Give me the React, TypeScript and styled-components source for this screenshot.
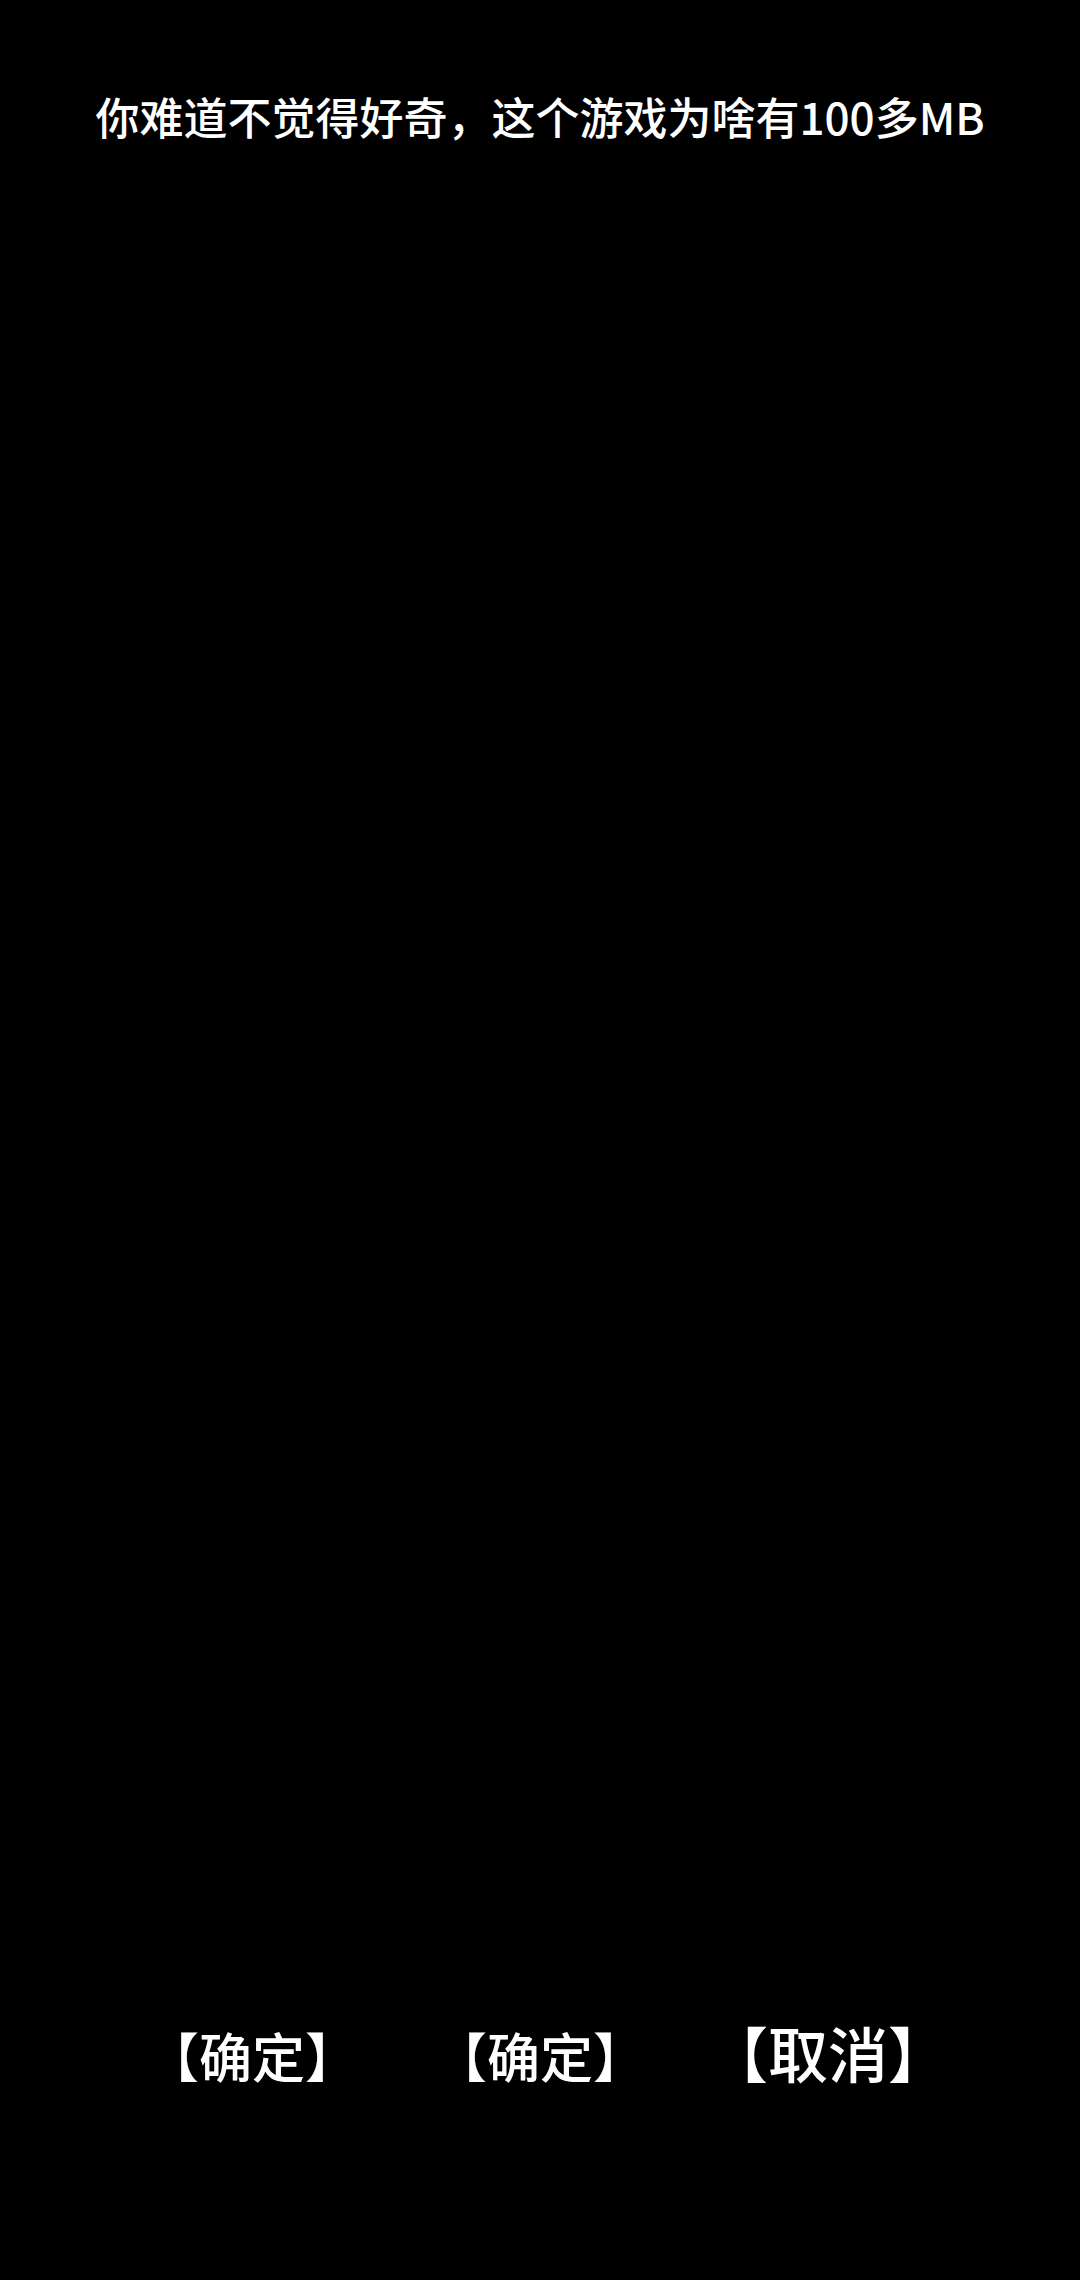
import React from "react";
import styled, { createGlobalStyle } from "styled-components";

const GlobalStyle = createGlobalStyle`
  html, body {
    margin: 0;
    padding: 0;
    background: #000;
  }
  body {
    font-family: "Noto Sans CJK SC", "Noto Sans", sans-serif;
  }
`;

const Screen = styled.div`
  width: 1080px;
  height: 2280px;
  background: #000;
  color: #fff;
  display: flex;
  flex-direction: column;
  overflow: hidden;
`;

const Title = styled.div`
  padding-top: 84px;
  text-align: center;
  font-size: 44px;
  line-height: 64px;
  font-weight: 500;
  white-space: nowrap;
`;

const Spacer = styled.div`
  flex: 1;
`;

const ButtonRow = styled.div`
  display: grid;
  grid-template-columns: repeat(3, 288px);
  justify-content: center;
  align-items: end;
  padding-bottom: 192px;
`;

const ActionButton = styled.button<{ $size: number }>`
  background: none;
  border: none;
  padding: 0;
  color: #fff;
  font-family: "Noto Sans CJK SC", "Noto Sans", sans-serif;
  font-size: ${(p) => p.$size}px;
  font-weight: 500;
  line-height: 1.2;
  text-align: center;
  cursor: pointer;
`;

const actions = [
  { label: "【确定】", size: 53 },
  { label: "【确定】", size: 53 },
  { label: "【取消】", size: 60 },
];

export default function App() {
  return (
    <>
      <GlobalStyle />
      <Screen>
        <Title>你难道不觉得好奇，这个游戏为啥有100多MB</Title>
        <Spacer />
        <ButtonRow>
          {actions.map((a, i) => (
            <ActionButton key={i} $size={a.size}>
              {a.label}
            </ActionButton>
          ))}
        </ButtonRow>
      </Screen>
    </>
  );
}
